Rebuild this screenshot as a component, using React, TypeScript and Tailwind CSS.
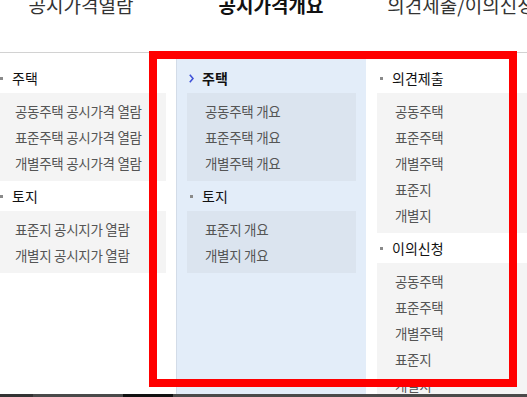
import React from "react";

type Section = {
  title: string;
  current?: boolean;
  items: string[];
};

type Column = {
  active?: boolean;
  sections: Section[];
};

const navItems = ["공시가격열람", "공시가격개요", "의견제출/이의신청"];

const columns: Column[] = [
  {
    sections: [
      { title: "주택", items: ["공동주택 공시가격 열람", "표준주택 공시가격 열람", "개별주택 공시가격 열람"] },
      { title: "토지", items: ["표준지 공시지가 열람", "개별지 공시지가 열람"] },
    ],
  },
  {
    active: true,
    sections: [
      { title: "주택", current: true, items: ["공동주택 개요", "표준주택 개요", "개별주택 개요"] },
      { title: "토지", items: ["표준지 개요", "개별지 개요"] },
    ],
  },
  {
    sections: [
      { title: "의견제출", items: ["공동주택", "표준주택", "개별주택", "표준지", "개별지"] },
      { title: "이의신청", items: ["공동주택", "표준주택", "개별주택", "표준지", "개별지"] },
    ],
  },
];

function SectionBlock({ section, active }: { section: Section; active?: boolean }) {
  return (
    <div>
      <div className="flex h-[30px] items-center pl-[3px]">
        {section.current ? (
          <svg width="5" height="9" viewBox="0 0 5 9" className="-ml-px mr-[8px]">
            <polyline points="0.8,0.8 4,4.5 0.8,8.2" fill="none" stroke="#3f51d8" strokeWidth="1.6" />
          </svg>
        ) : (
          <span className="mr-[9px] h-[3px] w-[3px] bg-[#8a8a8a]" />
        )}
        <span className={`text-[14px] text-[#111] ${section.current ? "font-bold" : "font-normal"}`}>
          {section.title}
        </span>
      </div>
      <ul className={`py-[5px] ${active ? "bg-[#dbe4ef]" : "bg-[#f4f4f4]"}`}>
        {section.items.map((item) => (
          <li key={item} className="h-[26px] whitespace-nowrap pl-[18px] text-[13.5px] leading-[26px] tracking-[-0.3px] text-[#555]">
            {item}
          </li>
        ))}
      </ul>
    </div>
  );
}

export default function App() {
  return (
    <div
      className="relative h-[397px] w-[527px] overflow-hidden bg-white"
      style={{ fontFamily: '"Noto Sans CJK KR", "Noto Sans", sans-serif' }}
    >
      <nav className="flex h-[53px] items-start border-b border-[#d2d2d2]">
        <div className="relative -top-[6px] ml-[-14px] flex">
          {navItems.map((label, i) => (
            <div
              key={label}
              className={`w-[190px] shrink-0 whitespace-nowrap text-center text-[19px] leading-[22px] ${
                i === 1 ? "font-bold text-[#111]" : "text-[#333]"
              }`}
            >
              {label}
            </div>
          ))}
        </div>
      </nav>

      <div className="ml-[-14px] flex">
        {columns.map((col, i) => (
          <div
            key={i}
            className={`h-[400px] w-[190px] shrink-0 pr-[10px] pt-[10px] ${
              col.active ? "border-l border-[#d3dce8] bg-[#e3edf9] pl-[10px]" : "pl-[11px]"
            }`}
          >
            {col.sections.map((s) => (
              <SectionBlock key={s.title} section={s} active={col.active} />
            ))}
          </div>
        ))}
      </div>

      <div className="absolute bottom-0 left-0 flex h-[3px] w-full bg-[#4a4a4a]">
        <div className="h-full w-[33px] bg-[#333]" />
        <div className="ml-[90px] h-full w-[50px] bg-[#111]" />
      </div>

      <div className="absolute left-[149px] top-[51px] h-[336px] w-[368px] border-[8px] border-[#ff0000]" />
    </div>
  );
}
